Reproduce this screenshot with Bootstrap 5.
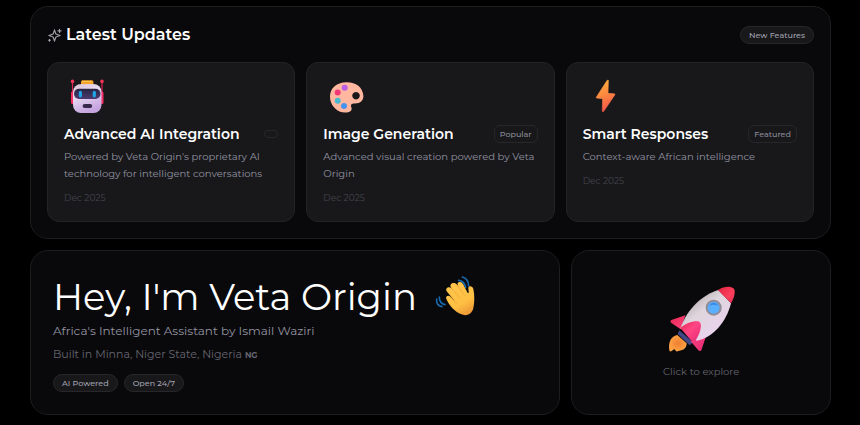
<!DOCTYPE html>
<html lang="en" data-bs-theme="dark">
<head>
<meta charset="utf-8">
<meta name="viewport" content="width=device-width, initial-scale=1">
<title>Veta Origin</title>
<link href="https://cdn.jsdelivr.net/npm/bootstrap@5.3.0/dist/css/bootstrap.min.css" rel="stylesheet">
<style>
  body { background: #000; color: #fafafa; font-family: Montserrat, Inter, sans-serif; font-size: 10px; line-height: 17px; }
  .page { padding: 6px 29px 10px 30px; display: grid; gap: 11px; }
  .panel { background: #09090b; border: 1px solid #1d1d20; border-radius: 18px; }
  .updates { padding: 16px; }
  .updates-head { height: 22px; margin: 1px 0 16px; }
  .updates-head h2 { font-size: 16px; line-height: 22px; font-weight: 600; }
  .tri { display: grid; grid-template-columns: repeat(3, minmax(0, 1fr)); gap: 11px; }
  .wide { grid-column: span 2; }
  .update { background: #18181b; border: 1px solid #232326; border-radius: 12px; padding: 16px; }
  .update svg { display: block; margin-bottom: 9px; }
  .update h3 { font-size: 14px; line-height: 20px; font-weight: 600; }
  .update p { color: #9393a1; margin: 4px 0 9px; }
  .update time { display: block; color: #44444d; font-size: 9px; line-height: 14px; }
  .chip, .tag { font-size: 8px; line-height: 12px; font-weight: 500; color: #a1a1ae; border: 1px solid #27272a; }
  .chip { padding: 2px 8px; background: #18181b; border-radius: 9px; }
  .tag { padding: 2px 5px; border-radius: 6px; color: #8b8b98; }
  .tag:empty { padding: 3px 6px; border-radius: 4px; }
  .hello { padding: 22px; }
  .greeting { gap: 13px; }
  .hello h1 { font-size: 37px; line-height: 48px; font-weight: 400; }
  .hello .lede { font-size: 12px; line-height: 20px; color: #9393a1; }
  .hello .place { font-size: 11px; line-height: 18px; color: #666670; margin: 4px 0 10px; }
  .hello .place small { font-size: 8px; font-weight: 700; }
  .chips { gap: 6px; }
  .explore { color: #666670; font-size: 10px; line-height: 16px; padding-bottom: 6px; }
</style>
<script src="https://cdn.jsdelivr.net/npm/bootstrap@5.3.0/dist/js/bootstrap.bundle.min.js"></script>
</head>
<body>
<main class="page">
  <section class="panel updates">
    <div class="updates-head d-flex align-items-center justify-content-between">
      <div class="d-flex align-items-center gap-1">
        <svg width="15" height="15" viewBox="0 0 24 24" fill="none" stroke="#a1a1aa" stroke-width="1.8" stroke-linecap="round" stroke-linejoin="round" aria-hidden="true"><path d="M12 3l-1.9 5.8a2 2 0 0 1-1.3 1.3L3 12l5.8 1.9a2 2 0 0 1 1.3 1.3L12 21l1.9-5.8a2 2 0 0 1 1.3-1.3L21 12l-5.8-1.9a2 2 0 0 1-1.3-1.3zM4 18v3M2.500 19.500h3M20 2v5M17.500 4.500h5"/></svg>
        <h2 class="mb-0">Latest Updates</h2>
      </div>
      <span class="chip">New Features</span>
    </div>
    <div class="tri">
      <article class="update">
        <svg width="46" height="36" viewBox="0 0 46 36" aria-hidden="true">
          <defs>
            <linearGradient id="face" x2=".4" y2="1"><stop stop-color="#d8bfce"/><stop offset=".4" stop-color="#e9ddf2"/><stop offset="1" stop-color="#c7a5e0"/></linearGradient>
            <linearGradient id="visor" x2="0" y2="1"><stop stop-color="#282442"/><stop offset="1" stop-color="#4b3b70"/></linearGradient>
          </defs>
          <path d="M8.5 3v12M38 3v12" stroke="#d92250" stroke-width="1.2"/>
          <circle cx="8.5" cy="2.4" r="1.8" fill="#f23558"/><circle cx="38" cy="2.4" r="1.8" fill="#f23558"/>
          <rect x="7" y="12.500" width="5" height="12.500" rx="1.500" fill="#f72c62"/><rect x="34.500" y="12.500" width="5" height="12.500" rx="1.500" fill="#f72c62"/>
          <rect x="17" y="1.200" width="12.400" height="5" rx="1.500" fill="#f6a52c"/><path d="M18 2.500h10" stroke="#ffc34a"/>
          <rect x="9" y="5" width="28.500" height="29" rx="8" fill="url(#face)"/>
          <rect x="10" y="9.800" width="26.500" height="10.200" rx="5" fill="url(#visor)"/>
          <rect x="14.800" y="11.800" width="3.200" height="6.600" rx="1.600" fill="#20a4e8"/><rect x="28.700" y="11.800" width="3.200" height="6.600" rx="1.600" fill="#20a4e8"/>
          <rect x="18.600" y="25" width="9.600" height="4" rx="2" fill="#38294f"/>
        </svg>
        <div class="d-flex align-items-center justify-content-between"><h3 class="mb-0">Advanced AI Integration</h3><span class="tag"></span></div>
        <p>Powered by Veta Origin's proprietary AI technology for intelligent conversations</p>
        <time datetime="2025-12">Dec 2025</time>
      </article>
      <article class="update">
        <svg width="46" height="36" viewBox="0 0 46 36" aria-hidden="true">
          <path fill="#ffb7a0" fill-rule="evenodd" d="M23.500 3.200C13 3.500 7 9.500 7 17.500C7 27 14.500 33.600 22 33.600C27 33.600 29.300 31.600 28.500 28.700C27.500 25.800 28 24.500 32 24.500C37.500 24.500 40.400 21.500 40.400 17C40 8 32.500 3 23.500 3.200ZM33 12.900a3.800 3.800 0 1 0 .01 0Z"/>
          <circle cx="21.700" cy="8.700" r="3" fill="#bb5ee8"/><circle cx="14.700" cy="13.400" r="3" fill="#f23876"/><circle cx="14.700" cy="21.700" r="3" fill="#48b8cf"/><circle cx="21" cy="27" r="3" fill="#4593ef"/>
        </svg>
        <div class="d-flex align-items-center justify-content-between"><h3 class="mb-0">Image Generation</h3><span class="tag">Popular</span></div>
        <p>Advanced visual creation powered by Veta Origin</p>
        <time datetime="2025-12">Dec 2025</time>
      </article>
      <article class="update">
        <svg width="46" height="36" viewBox="0 0 46 36" aria-hidden="true">
          <defs><linearGradient id="bolt" x1=".3" x2=".6" y2="1"><stop stop-color="#ffb23e"/><stop offset=".5" stop-color="#fb8440"/><stop offset="1" stop-color="#f3514d"/></linearGradient></defs>
          <path fill="url(#bolt)" stroke="url(#bolt)" stroke-width=".6" stroke-linejoin="round" d="M24.200 1.300L13.300 18.200Q13 19 13.800 19.100L19.600 19.700L19.300 32.400L20.600 32.500L31.900 15.800Q32.200 14.800 31.200 14.800L25 14.300L25.400 1.300Z"/>
        </svg>
        <div class="d-flex align-items-center justify-content-between"><h3 class="mb-0">Smart Responses</h3><span class="tag">Featured</span></div>
        <p>Context-aware African intelligence</p>
        <time datetime="2025-12">Dec 2025</time>
      </article>
    </div>
  </section>

  <div class="tri">
    <section class="panel hello wide">
      <div class="greeting d-flex align-items-center">
        <h1 class="mb-0">Hey, I'm Veta Origin</h1>
        <svg width="60" height="48" viewBox="0 10 180 144" aria-hidden="true">
          <defs><linearGradient id="hand" x1=".2" x2=".7" y2="1"><stop stop-color="#ffc64b"/><stop offset=".65" stop-color="#ffc044"/><stop offset="1" stop-color="#ec9836"/></linearGradient></defs>
          <g fill="none" stroke="#1769ad" stroke-width="5" stroke-linecap="round"><path d="M86 32Q103 34 107 53M97 22Q115 27 116 49M28 82Q28 101 45 105M20 88Q18 108 36 111"/></g>
          <path fill="url(#hand)" d="M49 88C45 79 56 75 61 81L76 96L50 65C45 54 57 49 64 56L69 62L62 52C58 41 72 35 80 44L86 53L83 45C80 36 93 33 99 43L113 70Q117 72 116 65L115 55C116 47 128 49 130 58C134 76 134 98 130 116C125 135 108 140 94 134C76 128 58 108 49 88Z"/>
          <path d="M65 57L90 85M82 47L103 76M61 81L82 104" fill="none" stroke="#efa038" stroke-width="2" stroke-linecap="round"/>
        </svg>
      </div>
      <p class="lede mb-0">Africa's Intelligent Assistant by Ismail Waziri</p>
      <p class="place">Built in Minna, Niger State, Nigeria <small>NG</small></p>
      <div class="chips d-flex">
        <span class="chip">AI Powered</span>
        <span class="chip">Open 24/7</span>
      </div>
    </section>

    <button type="button" class="panel explore d-flex flex-column align-items-center justify-content-center">
      <svg width="90" height="80" viewBox="2 0 270 240" aria-hidden="true">
        <defs>
          <linearGradient id="hull" x1=".25" y1=".2" x2=".75" y2=".8"><stop stop-color="#bcb4b8"/><stop offset=".35" stop-color="#ded6dc"/><stop offset="1" stop-color="#ead2ee"/></linearGradient>
          <linearGradient id="fin" x2="1" y2="1"><stop stop-color="#e92752"/><stop offset=".45" stop-color="#ff4684"/><stop offset="1" stop-color="#e62b73"/></linearGradient>
          <linearGradient id="nose" x2="1" y2="1"><stop stop-color="#e3243f"/><stop offset=".6" stop-color="#fb3f5d"/><stop offset="1" stop-color="#e62b4e"/></linearGradient>
          <radialGradient id="fire"><stop stop-color="#ed7f32"/><stop offset="1" stop-color="#ffa343"/></radialGradient>
        </defs>
        <path fill="url(#fire)" d="M66 165C45 170 39 187 42 211Q43 216 49 213L57 207L61 212Q64 216 69 213C86 211 94 204 94 190Z"/>
        <path fill="#414785" d="M72 151L113 187L103 196L67 162Z"/>
        <path fill="url(#fin)" d="M90 106L48 120Q43 122 47 128L76 148ZM152 169L138 211Q134 216 129 211L106 184Z"/>
        <path fill="url(#hull)" d="M189 30C142 44 96 85 75 145L124 182C173 174 213 126 227 70Z"/>
        <path fill="url(#nose)" d="M188 30C206 18 227 18 234 25C243 31 236 57 227 70Z"/>
        <path fill="url(#fin)" d="M75 144C91 128 120 120 132 125C144 135 131 166 119 184L108 182Z"/>
        <circle cx="175" cy="83" r="21" fill="#5aaeff" stroke="#8e8d98" stroke-width="6"/>
        <path d="M160 78Q175 59 190 78Q175 71 160 78" fill="#3987e5"/>
      </svg>
      <span class="mt-1">Click to explore</span>
    </button>
  </div>
</main>
</body>
</html>
